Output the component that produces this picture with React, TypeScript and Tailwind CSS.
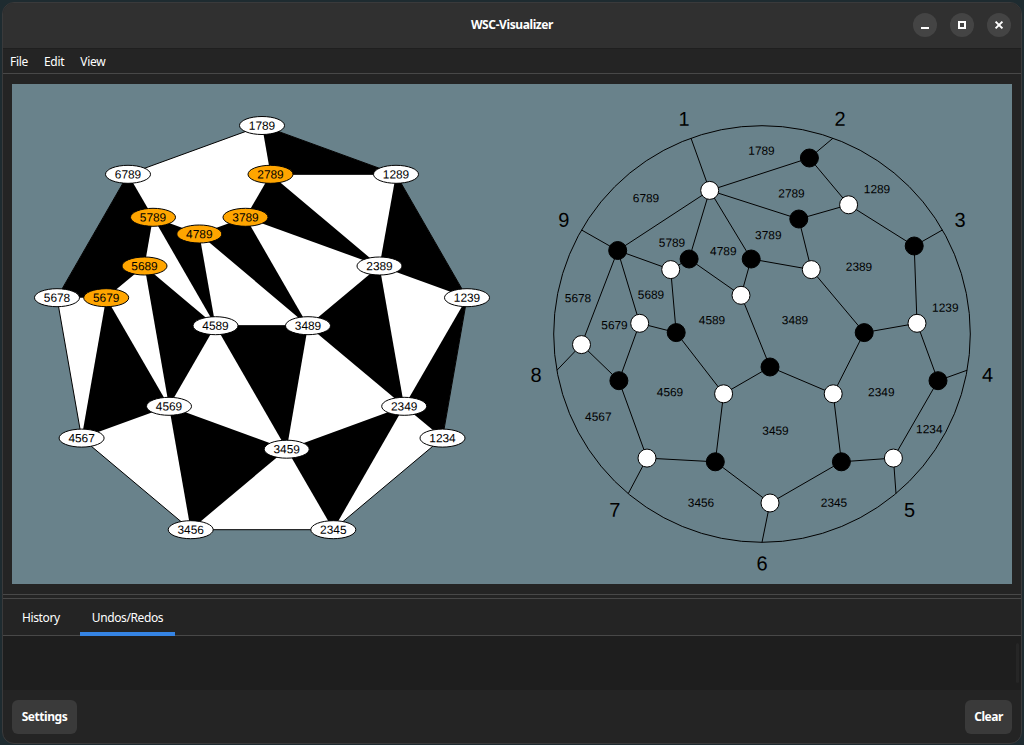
import React from "react";

type Point = [number, number];

const TILES: Record<string, Point> = {
  "1789": [262, 125.5],
  "6789": [128, 174.3],
  "2789": [270.5, 174.3],
  "1289": [396, 174.3],
  "5789": [153, 217.3],
  "3789": [245.5, 217.3],
  "4789": [199.3, 234],
  "5689": [144.5, 266],
  "2389": [379.5, 266],
  "5678": [57, 297.7],
  "5679": [106.2, 297.7],
  "1239": [467, 297.7],
  "4589": [215.5, 325.7],
  "3489": [308, 325.7],
  "4569": [169, 406.3],
  "2349": [404.2, 406.3],
  "4567": [81.6, 438.1],
  "1234": [442.5, 438.1],
  "3459": [286.7, 449.2],
  "3456": [190.7, 529.7],
  "2345": [333.3, 529.7],
};

const MUTABLE = ["2789", "5789", "3789", "4789", "5689", "5679"];

const HULL = ["1789", "1289", "1239", "1234", "2345", "3456", "4567", "5678", "6789"];

const BLACK_CLIQUES: string[][] = [
  ["1789", "1289", "2789"],
  ["6789", "5789", "5689", "5679", "5678"],
  ["2789", "2389", "3789"],
  ["3789", "3489", "4789"],
  ["4789", "4589", "5789"],
  ["1289", "1239", "2389"],
  ["5689", "4589", "4569"],
  ["5679", "4569", "4567"],
  ["4589", "3489", "3459"],
  ["2389", "2349", "3489"],
  ["4569", "3459", "3456"],
  ["3459", "2349", "2345"],
  ["2349", "1239", "1234"],
];

const polygon = (labels: string[]) => labels.map((l) => TILES[l].join(",")).join(" ");

const WHITE: Record<string, Point> = {
  a: [709.7, 190.4],
  b: [848.6, 204.8],
  c: [670.7, 269.6],
  d: [811.3, 269.6],
  e: [741, 295.3],
  f: [639.7, 323.3],
  g: [917, 323.3],
  h: [581.5, 344.6],
  i: [723.6, 393.8],
  j: [833.2, 393.8],
  k: [647, 458.1],
  l: [893.4, 458.1],
  m: [770, 503],
};

const BLACK: Record<string, Point> = {
  A: [809.4, 158],
  B: [798.8, 219],
  C: [914.2, 246],
  D: [617.7, 250.5],
  E: [689.1, 259],
  F: [751.2, 259],
  G: [676.2, 332.6],
  H: [864.2, 332.6],
  I: [770, 367],
  J: [618.9, 380.7],
  K: [938, 380.7],
  L: [715.3, 461.8],
  M: [841.4, 461.8],
};

const RIM: Record<string, Point> = {
  "1": [691, 138.2],
  "2": [833, 138.2],
  "3": [942.4, 230],
  "4": [967.2, 370.2],
  "5": [896, 493.5],
  "6": [762, 542.3],
  "7": [628.3, 493.5],
  "8": [557, 370.2],
  "9": [581.6, 230],
};

const NODES: Record<string, Point> = { ...WHITE, ...BLACK, ...RIM };

const EDGES =
  "1a 2A 3C 4K 5l 6m 7k 8h 9D aA aB aD aE aF Ab bB bC Bd Fd Fe Ee Ec cD cG Df Dh fG fJ hJ Jk kL Li Gi iI eI Ij dH jH Hg gC gK Kl lM jM Mm mL".split(" ");

const FACES: [string, number, number][] = [
  ["1789", 761.5, 150.5],
  ["6789", 646, 198],
  ["2789", 791.5, 193.3],
  ["1289", 877, 189],
  ["5789", 672, 242.5],
  ["4789", 723.3, 251],
  ["3789", 768.3, 235],
  ["2389", 859, 266.7],
  ["5678", 578, 298],
  ["5689", 651, 294.5],
  ["5679", 614.5, 325],
  ["4589", 712, 320],
  ["3489", 795, 320],
  ["1239", 945.3, 307.5],
  ["4569", 670, 392],
  ["2349", 881.3, 392],
  ["4567", 598.3, 416.5],
  ["1234", 929.3, 429],
  ["3459", 775.5, 430.5],
  ["3456", 701, 502.5],
  ["2345", 834, 502.5],
];

const RIM_LABELS: [string, number, number][] = [
  ["1", 684, 119],
  ["2", 840, 119],
  ["3", 960, 220],
  ["4", 987.5, 375],
  ["5", 909.5, 510],
  ["6", 762, 563.5],
  ["7", 614.7, 510],
  ["8", 536, 375],
  ["9", 563.7, 220],
];

// The slight rotation keeps glyphs on subpixel positions instead of the hinting grid.
function Label({ x, y, size, children }: { x: number; y: number; size: number; children: string }) {
  return (
    <text transform={`translate(${x} ${y}) rotate(0.05)`} y={size * 0.35} fontSize={size} textAnchor="middle">
      {children}
    </text>
  );
}

function TilingView() {
  return (
    <g>
      <polygon points={polygon(HULL)} fill="#fff" stroke="#000" />
      {BLACK_CLIQUES.map((c) => (
        <polygon key={c.join()} points={polygon(c)} fill="#000" />
      ))}
      <polyline points={polygon(["2789", "1289"])} stroke="#000" />
      <polyline points={polygon(["4589", "3489"])} stroke="#000" />
      {Object.entries(TILES).map(([label, [x, y]]) => (
        <g key={label}>
          <ellipse cx={x} cy={y} rx="22.5" ry="9" fill={MUTABLE.includes(label) ? "#ffa500" : "#fff"} stroke="#000" />
          <Label x={x} y={y} size={11.9}>{label}</Label>
        </g>
      ))}
    </g>
  );
}

function PlabicGraph() {
  return (
    <g>
      <circle cx="762" cy="334" r="208.3" fill="none" stroke="#000" />
      {EDGES.map((e) => {
        const [p, q] = [NODES[e[0]], NODES[e[1]]];
        return <line key={e} x1={p[0]} y1={p[1]} x2={q[0]} y2={q[1]} stroke="#000" />;
      })}
      {Object.entries(WHITE).map(([k, [x, y]]) => (
        <circle key={k} cx={x} cy={y} r="9" fill="#fff" stroke="#000" />
      ))}
      {Object.entries(BLACK).map(([k, [x, y]]) => (
        <circle key={k} cx={x} cy={y} r="9" fill="#000" stroke="#000" />
      ))}
      {FACES.map(([t, x, y]) => (
        <Label key={t} x={x} y={y} size={11.9}>{t}</Label>
      ))}
      {RIM_LABELS.map(([t, x, y]) => (
        <Label key={t} x={x} y={y - 0.3} size={20}>{t}</Label>
      ))}
    </g>
  );
}

function WindowButton({ label, children }: { label: string; children: React.ReactNode }) {
  return (
    <button aria-label={label} className="flex size-6 items-center justify-center rounded-full bg-[#444444]">
      <svg width="8" height="8" viewBox="0 0 8 8" fill="none" stroke="#fff" strokeWidth="2" className="overflow-visible">
        {children}
      </svg>
    </button>
  );
}

export default function App() {
  return (
    <div className="h-[745px] w-[1024px] bg-[#1e2b30] pt-0.5 pr-0.5 pb-px pl-0.5 font-['Noto_Sans',sans-serif] text-[12px] text-white">
      <div className="flex h-full flex-col overflow-hidden rounded-xl border border-[#3a3a3b] bg-[#242424]">
        <header className="grid h-[46px] shrink-0 grid-cols-[1fr_auto_1fr] items-center border-b border-[#1f1f1f] bg-[#303030] px-2.5 pb-0.5">
          <span />
          <h1 className="text-[12px] font-bold tracking-[-0.4px]">WSC-Visualizer</h1>
          <div className="flex justify-end gap-[13px]">
            <WindowButton label="Minimize"><path d="M0 7h8" /></WindowButton>
            <WindowButton label="Maximize"><path d="M1 1h6v6h-6z" /></WindowButton>
            <WindowButton label="Close"><path d="M.6.6l6.8 6.8M7.4.6L.6 7.4" /></WindowButton>
          </div>
        </header>
        <nav className="flex h-[25px] shrink-0 items-center gap-[16px] border-b border-[#484848] pt-0.5 pl-[7px] tracking-[-0.3px]">
          <span>File</span>
          <span>Edit</span>
          <span>View</span>
        </nav>
        <main className="h-[520px] shrink-0 px-[9px] pt-2.5">
          <svg
            width="1000"
            height="500"
            viewBox="12 84 1000 500"
            textRendering="geometricPrecision"
            className="block bg-[#69828b] font-['Liberation_Sans',sans-serif]"
          >
            <TilingView />
            <PlabicGraph />
          </svg>
        </main>
        <div className="h-[5px] shrink-0 border-y border-[#484848]" />
        <div className="flex h-[37px] shrink-0 border-b border-[#484848] pl-[7px] tracking-[-0.38px]">
          <button className="h-[37px] w-[62px] px-3 text-left">History</button>
          <button className="ml-2 h-[37px] w-[95px] border-b-4 border-[#3584e4] pt-1">Undos/Redos</button>
        </div>
        <section className="flex h-[54px] shrink-0 justify-end bg-[#1e1e1e] pt-[7px] pr-0.5">
          <div className="h-10 w-[3px] rounded-sm bg-[#262626]" />
        </section>
        <footer className="flex h-[53px] items-center justify-between px-[9px]">
          <button className="mt-px h-[34px] w-[65px] rounded-md bg-[#3a3a3a] font-bold tracking-[-0.45px]">Settings</button>
          <button className="mt-px h-[34px] w-[47px] rounded-md bg-[#3a3a3a] font-bold tracking-[-0.45px]">Clear</button>
        </footer>
      </div>
    </div>
  );
}
